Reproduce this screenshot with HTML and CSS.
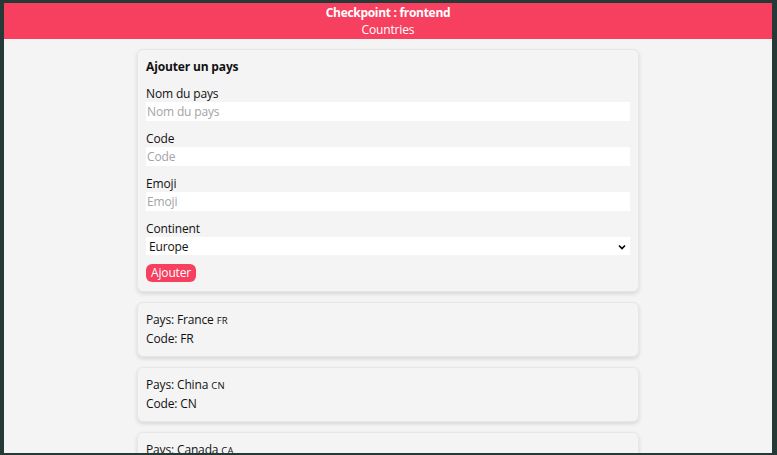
FILE: index.html
```html
<!DOCTYPE html>
<html lang="fr">
<head>
<meta charset="utf-8">
<title>Checkpoint : frontend</title>
<link rel="stylesheet" href="styles.css">
</head>
<body>
<div class="window">
  <header class="header">
    <h1 class="title">Checkpoint : frontend</h1>
    <div class="subtitle">Countries</div>
  </header>
  <main class="main">
    <form class="card form">
      <h2 class="form-title">Ajouter un pays</h2>
      <label class="field">
        <span class="label">Nom du pays</span>
        <input class="input" type="text" placeholder="Nom du pays">
      </label>
      <label class="field">
        <span class="label">Code</span>
        <input class="input" type="text" placeholder="Code">
      </label>
      <label class="field">
        <span class="label">Emoji</span>
        <input class="input" type="text" placeholder="Emoji">
      </label>
      <label class="field field-last">
        <span class="label">Continent</span>
        <span class="select">
          <span class="select-value">Europe</span>
          <svg class="chevron" width="8" height="6" viewBox="0 0 8 6"><path d="M1 1.5 L4 4.5 L7 1.5" fill="none" stroke="#000" stroke-width="1.6"/></svg>
        </span>
      </label>
      <button class="button" type="button">Ajouter</button>
    </form>

    <div class="card country">
      <div>Pays: France <span class="flag">FR</span></div>
      <div>Code: FR</div>
    </div>
    <div class="card country">
      <div>Pays: China <span class="flag">CN</span></div>
      <div>Code: CN</div>
    </div>
    <div class="card country">
      <div>Pays: Canada <span class="flag">CA</span></div>
      <div>Code: CA</div>
    </div>
  </main>
</div>
</body>
</html>
```
FILE: styles.css
```css
html, body {
  margin: 0;
  padding: 0;
  background: #253a37;
}
body {
  padding: 3px 5px 2px 4px;
  font-family: "Open Sans", "Noto Sans", sans-serif;
  font-size: 12px;
  letter-spacing: -0.15px;
  color: #111;
}
.window {
  height: 450px;
  overflow: hidden;
  background: #f4f4f4;
}
.header {
  background: #f74060;
  color: #fff;
  text-align: center;
  height: 36px;
  display: flex;
  flex-direction: column;
  justify-content: center;
}
.title {
  margin: 0;
  font-size: 12px;
  font-weight: 700;
  line-height: 17px;
  letter-spacing: -0.3px;
}
.subtitle {
  line-height: 17px;
}
.main {
  width: 502px;
  margin: 10px 0 0 133px;
  display: flex;
  flex-direction: column;
  gap: 10px;
}
.card {
  background: #f4f4f4;
  border: 1px solid #e7e7ea;
  border-radius: 6px;
  box-shadow: 0 2px 4px rgba(0, 0, 0, 0.12);
  padding: 8px;
}
.form {
  display: flex;
  flex-direction: column;
  align-items: flex-start;
  margin: 0;
  padding-bottom: 9px;
}
.form-title {
  margin: 0 0 10px;
  font-size: 12px;
  font-weight: 700;
  line-height: 18px;
}
.field {
  display: flex;
  flex-direction: column;
  width: 100%;
  margin-bottom: 10px;
}
.field-last {
  margin-bottom: 9px;
}
.label {
  line-height: 16px;
}
.input {
  border: 0;
  outline: none;
  background: #fff;
  height: 19px;
  padding: 0 1px;
  margin: 0;
  font: inherit;
  letter-spacing: inherit;
  color: #111;
}
.input::placeholder {
  color: #a3a3a8;
}
.select {
  display: flex;
  align-items: center;
  justify-content: space-between;
  background: #fff;
  height: 18px;
  padding: 0 4px 0 3px;
}
.chevron {
  margin-top: 1px;
}
.button {
  background: #f74060;
  color: #fff;
  border: 0;
  border-radius: 6px;
  font: inherit;
  letter-spacing: inherit;
  height: 18px;
  line-height: 18px;
  padding: 0 5px;
  margin: 0;
}
.country {
  line-height: 18px;
}
.flag {
  font-size: 9.5px;
  letter-spacing: 0.3px;
}
```
